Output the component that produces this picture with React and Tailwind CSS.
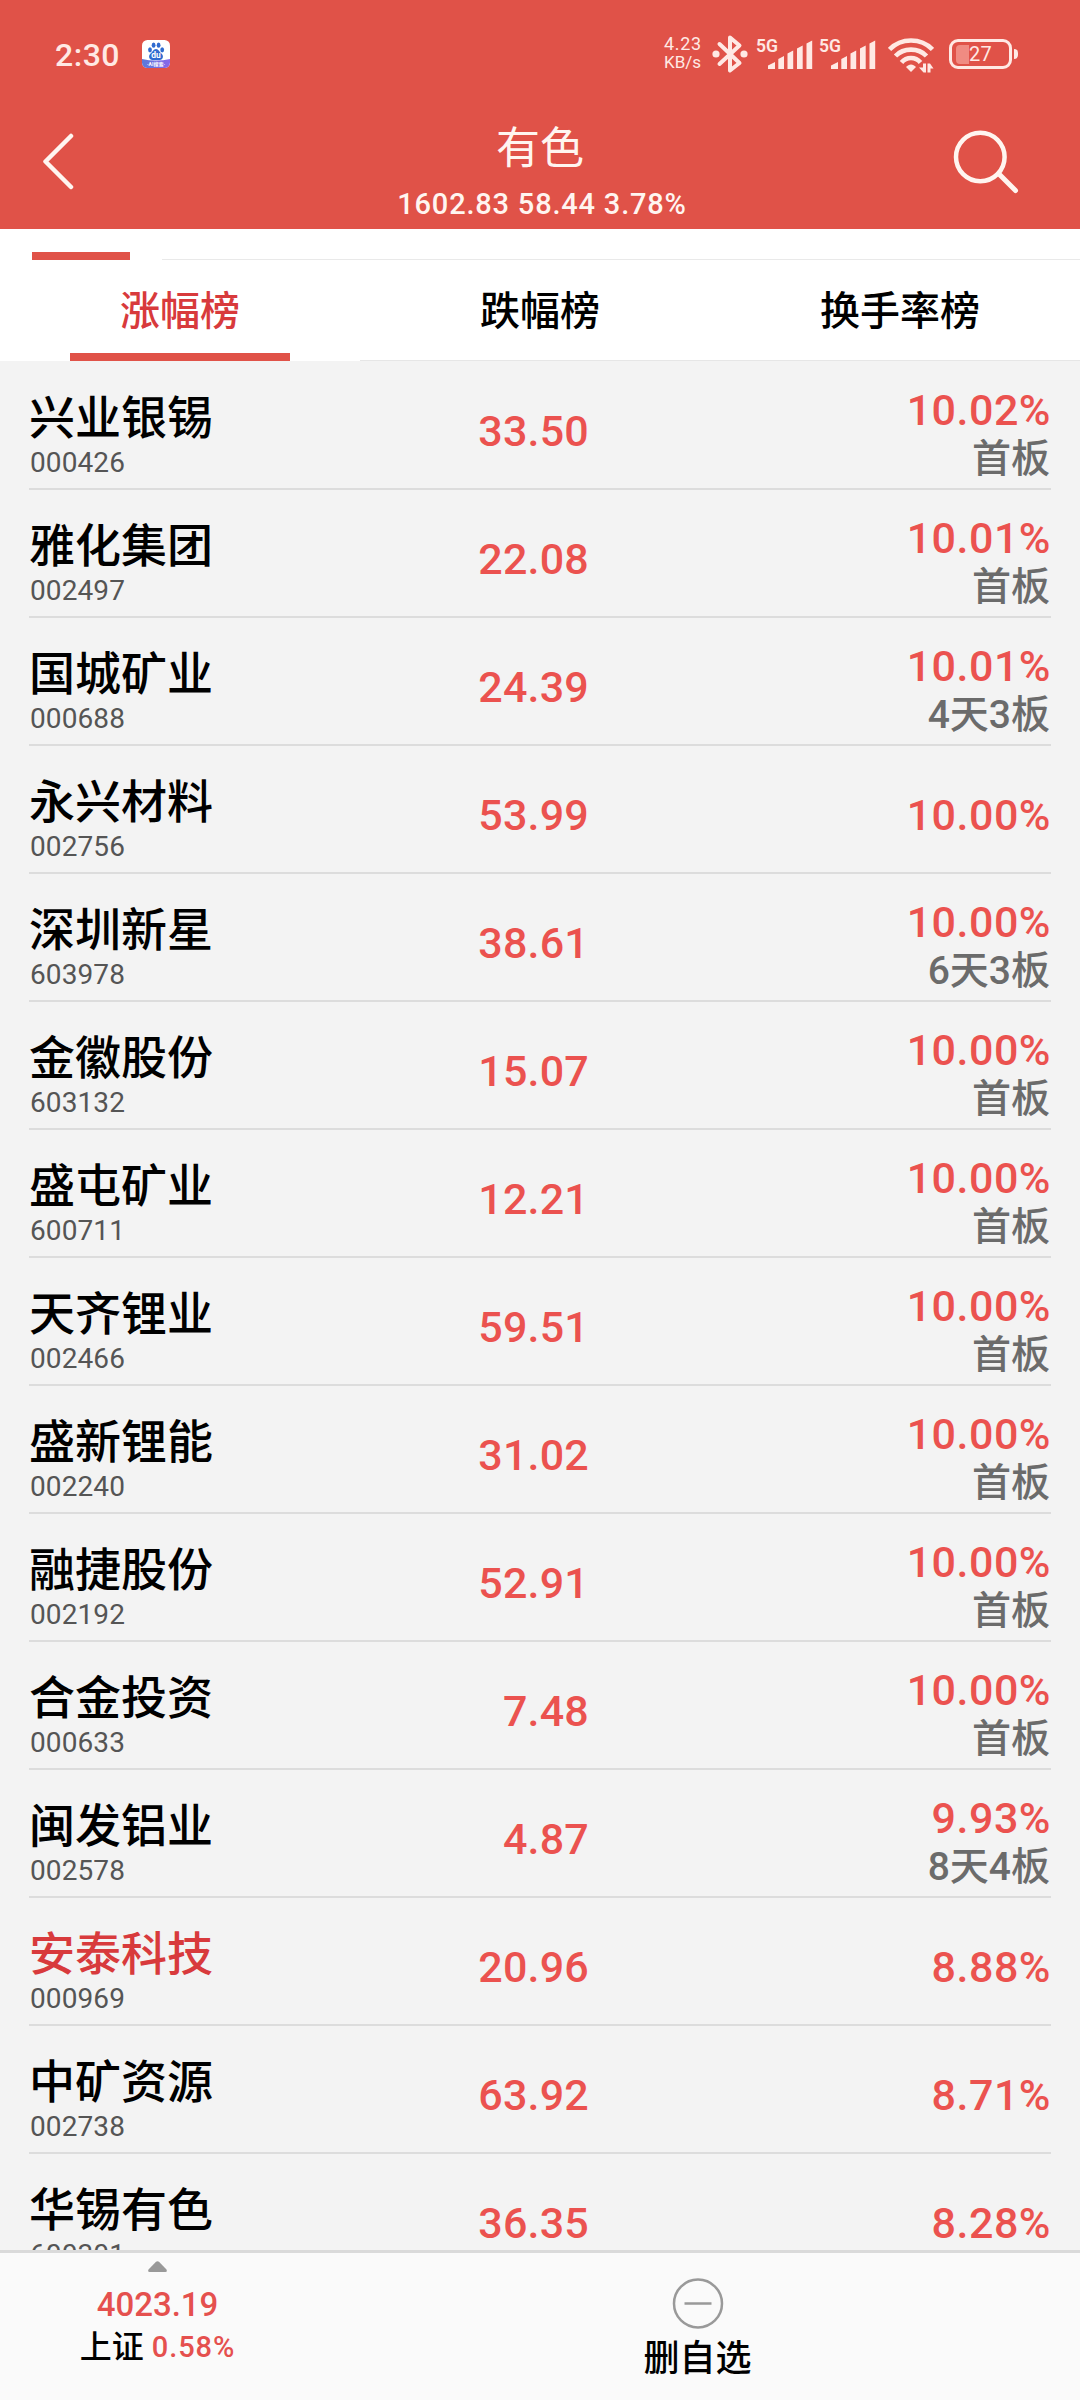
const stocks = [
  { name: "兴业银锡", code: "000426", price: "33.50", change: "10.02%", tag: "首板" },
  { name: "雅化集团", code: "002497", price: "22.08", change: "10.01%", tag: "首板" },
  { name: "国城矿业", code: "000688", price: "24.39", change: "10.01%", tag: "4天3板" },
  { name: "永兴材料", code: "002756", price: "53.99", change: "10.00%" },
  { name: "深圳新星", code: "603978", price: "38.61", change: "10.00%", tag: "6天3板" },
  { name: "金徽股份", code: "603132", price: "15.07", change: "10.00%", tag: "首板" },
  { name: "盛屯矿业", code: "600711", price: "12.21", change: "10.00%", tag: "首板" },
  { name: "天齐锂业", code: "002466", price: "59.51", change: "10.00%", tag: "首板" },
  { name: "盛新锂能", code: "002240", price: "31.02", change: "10.00%", tag: "首板" },
  { name: "融捷股份", code: "002192", price: "52.91", change: "10.00%", tag: "首板" },
  { name: "合金投资", code: "000633", price: "7.48", change: "10.00%", tag: "首板" },
  { name: "闽发铝业", code: "002578", price: "4.87", change: "9.93%", tag: "8天4板" },
  { name: "安泰科技", code: "000969", price: "20.96", change: "8.88%", marked: true },
  { name: "中矿资源", code: "002738", price: "63.92", change: "8.71%" },
  { name: "华锡有色", code: "600301", price: "36.35", change: "8.28%" },
];

const tabs = ["涨幅榜", "跌幅榜", "换手率榜"];

function BaiduIcon() {
  return (
    <svg className="h-7 w-7" viewBox="0 0 28 28">
      <defs>
        <linearGradient id="strip" x1="0" y1="0" x2="1" y2="0">
          <stop offset="0" stopColor="#5b7ad8" />
          <stop offset="1" stopColor="#8a66ea" />
        </linearGradient>
        <clipPath id="tile">
          <rect width="28" height="28" rx="5.5" />
        </clipPath>
      </defs>
      <g clipPath="url(#tile)">
        <rect width="28" height="28" fill="#fff" />
        <path d="M0 19Q14 22 28 19V28H0Z" fill="url(#strip)" />
        <g fill="#2f6bd0">
          <ellipse cx="8" cy="9.8" rx="1.9" ry="2.6" />
          <ellipse cx="11.6" cy="5.2" rx="1.9" ry="2.6" />
          <ellipse cx="16.6" cy="5.2" rx="1.9" ry="2.6" />
          <ellipse cx="20.2" cy="9.8" rx="1.9" ry="2.6" />
          <path d="M14 9C11.5 9 10.5 12 8.5 13.6C6 16 7 20 10.5 20H17.7C21.2 20 22 16 19.5 13.6C17.5 12 16.5 9 14 9Z" />
        </g>
        <text x="14" y="18.3" textAnchor="middle" fontSize="8.5" fontWeight="700" fill="#fff">du</text>
        <text x="14" y="26.3" textAnchor="middle" fontSize="5" fontWeight="700" fill="#fff">·AI搜索·</text>
      </g>
    </svg>
  );
}

function Bluetooth() {
  return (
    <svg className="h-10 w-9" viewBox="0 0 36 40" fill="none" stroke="currentColor">
      <path d="M7.5 10L27.5 29L18 36.5V3.5L27.5 11.5L7.5 30" strokeWidth="4" strokeLinejoin="round" strokeLinecap="round" />
      <circle cx="4" cy="20" r="3.6" fill="currentColor" stroke="none" />
      <circle cx="32" cy="20" r="3.6" fill="currentColor" stroke="none" />
    </svg>
  );
}

function Signal() {
  return (
    <svg className="h-[39px] w-[57px]" viewBox="0 -7 57 39" fill="currentColor">
      <text x="0" y="13.5" fontSize="19" fontWeight="600" textLength="22" lengthAdjust="spacingAndGlyphs">5G</text>
      <path d="M12 31V27.5L19 24V31ZM22.3 31V21L28 18V31ZM31.5 31V15.5L37.2 12.5V31ZM41 31V10.5L46.7 7.5V31ZM50.5 31V5.5L56.2 2.5V31Z" />
    </svg>
  );
}

function Wifi() {
  return (
    <svg className="h-9 w-[46px]" viewBox="0 0 46 36" fill="none" stroke="currentColor" strokeWidth="4.6">
      <path d="M1.5 12.5C13 0.5 33 0.5 44.5 12.5" />
      <path d="M7.5 19C15.5 10.5 30.5 10.5 38.5 19" />
      <path d="M13.5 25.5C18.5 19.5 27.5 19.5 32.5 25.5" />
      <path d="M18 30C21 26.5 25 26.5 28 30L23 35Z" fill="currentColor" stroke="none" />
      <path d="M35 26.5H38V35.5H35.5L31 30.5H35ZM39.5 26.5H42L45.5 31.5H42.5V35.5H39.5Z" fill="currentColor" stroke="none" />
    </svg>
  );
}

function Battery() {
  return (
    <div className="flex items-center gap-[2px]">
      <div className="flex h-[30px] w-[63px] items-center rounded-[9px] border-[3px] border-current pl-[4px]">
        <div className="h-[19px] w-[13px] rounded-l-[4px] bg-[#f08b82]" />
        <span className="text-[20px] leading-none tracking-[0.3px]">27</span>
      </div>
      <div className="h-[10px] w-1 rounded-r-full bg-current" />
    </div>
  );
}

function StatusBar() {
  return (
    <div className="flex h-[75px] items-start justify-between pl-[55px] pr-[62px] text-[#ffe9e4]">
      <div className="flex pt-[40px]">
        <span className="w-[87px] text-[32px] font-medium leading-[30px] tracking-[0.5px]">2:30</span>
        <BaiduIcon />
      </div>
      <div className="flex pt-[34px]">
        <div className="w-[48px] text-[18px] leading-[19px]">
          <div className="tracking-[0.7px]">4.23</div>
          <div className="text-[17px]">KB/s</div>
        </div>
        <Bluetooth />
        <div className="-mt-[3px] ml-2 flex gap-[6px]">
          <Signal />
          <Signal />
        </div>
        <div className="ml-3 mt-[3px]">
          <Wifi />
        </div>
        <div className="ml-[15px] mt-[5px]">
          <Battery />
        </div>
      </div>
    </div>
  );
}

function Header() {
  return (
    <header className="h-[229px] bg-[#e05248] text-[#fff5f0]">
      <StatusBar />
      <div className="flex h-[154px]">
        <div className="flex flex-1">
          <svg className="ml-[41px] mt-[58px] h-[58px] w-[60px]" viewBox="0 0 60 58" fill="none" stroke="currentColor" strokeWidth="4.5" strokeLinecap="round" strokeLinejoin="round">
            <path d="M30 3L4.5 28.5L30 54" />
          </svg>
        </div>
        <div className="flex flex-col items-center pt-[49px]">
          <h1 className="text-[44px] leading-[50px]">有色</h1>
          <p className="mt-[15px] pl-1 text-[29px] font-medium leading-[30px] tracking-[0.8px]">1602.83 58.44 3.78%</p>
        </div>
        <div className="flex flex-1 justify-end">
          <svg className="mr-[61px] mt-[54px] h-[66px] w-[66px]" viewBox="0 0 66 66" fill="none" stroke="currentColor" strokeWidth="4.5" strokeLinecap="round">
            <circle cx="27.3" cy="28" r="24.3" />
            <path d="M46 45L62.5 61.5" strokeWidth="5" />
          </svg>
        </div>
      </div>
    </header>
  );
}

function Tabs() {
  return (
    <div className="bg-white">
      <div className="flex h-[31px] items-end pl-8">
        <div className="h-[8px] w-[98px] bg-[#e05248]" />
        <div className="ml-8 h-px flex-1 bg-[#e9e9e9]" />
      </div>
      <nav className="grid h-[101px] grid-cols-3">
        {tabs.map((tab, i) => (
          <div key={tab} className={`flex flex-col items-center justify-between ${i === 0 ? "text-[#d83a3c]" : "border-b border-[#e6e6e6] text-black"}`}>
            <span className="pt-[28px] text-[40px] font-medium leading-[48px]">{tab}</span>
            {i === 0 && <div className="h-[8px] w-[220px] bg-[#e05248]" />}
          </div>
        ))}
      </nav>
    </div>
  );
}

function StockRow({ name, code, price, change, tag, marked }) {
  return (
    <div className="flex h-32 shrink-0 border-b-2 border-[#dcdcdc]">
      <div className="w-[260px] pt-[31px]">
        <div className={`text-[46px] font-medium leading-[50px] ${marked ? "text-[#d83a3c]" : "text-black"}`}>{name}</div>
        <div className="mt-[5px] pl-px text-[28px] leading-[30px] tracking-[0.1px] text-[#555]">{code}</div>
      </div>
      <div className="w-[300px] pt-[44px] text-right text-[43px] font-medium leading-[50px] tracking-[0.2px] text-[#eb524f]">{price}</div>
      <div className={`flex-1 text-right ${tag ? "pt-[23px]" : "pt-[44px]"}`}>
        <div className="text-[43px] font-medium leading-[50px] tracking-[0.5px] text-[#eb524f]">{change}</div>
        {tag && <div className="pr-px pt-px text-[39px] font-medium leading-[46px] text-[#6b6b6b]">{tag}</div>}
      </div>
    </div>
  );
}

function BottomBar() {
  return (
    <footer className="flex h-[150px] shrink-0 border-t-[3px] border-[#dadada] bg-[#fafafa]">
      <div className="flex w-[315px] flex-col items-center pt-2">
        <svg className="h-[11px] w-[19px]" viewBox="0 0 19 11" fill="#999">
          <path d="M8 0.8Q9.5 -0.5 11 0.8L18.5 8.5Q19.5 11 17.5 11H1.5Q-0.5 11 0.5 8.5Z" />
        </svg>
        <div className="mt-4 text-[33px] font-medium leading-[34px] text-[#e5504e]">4023.19</div>
        <div className="mt-[5px] flex items-center leading-[40px]">
          <span className="text-[32px] font-medium text-black">上证</span>
          <span className="ml-[8px] text-[29px] font-medium tracking-[0.9px] text-[#e5504e]">0.58%</span>
        </div>
      </div>
      <div className="flex flex-1 flex-col items-center pt-6">
        <svg className="h-[52px] w-[52px]" viewBox="0 0 52 52" fill="none" stroke="#999" strokeWidth="2.5">
          <circle cx="26" cy="26.5" r="24" />
          <path d="M12.5 26.5H39.5" />
        </svg>
        <span className="mt-2 text-[36px] font-medium leading-[44px] text-black">删自选</span>
      </div>
    </footer>
  );
}

export default function App() {
  return (
    <div className="flex h-[2400px] w-[1080px] flex-col overflow-hidden bg-[#f3f3f3] font-[Roboto,'Noto_Sans_CJK_SC',sans-serif]">
      <Header />
      <Tabs />
      <main className="flex min-h-0 flex-1 flex-col overflow-hidden px-[29px] pt-px">
        {stocks.map((s) => (
          <StockRow key={s.code} {...s} />
        ))}
      </main>
      <BottomBar />
    </div>
  );
}
